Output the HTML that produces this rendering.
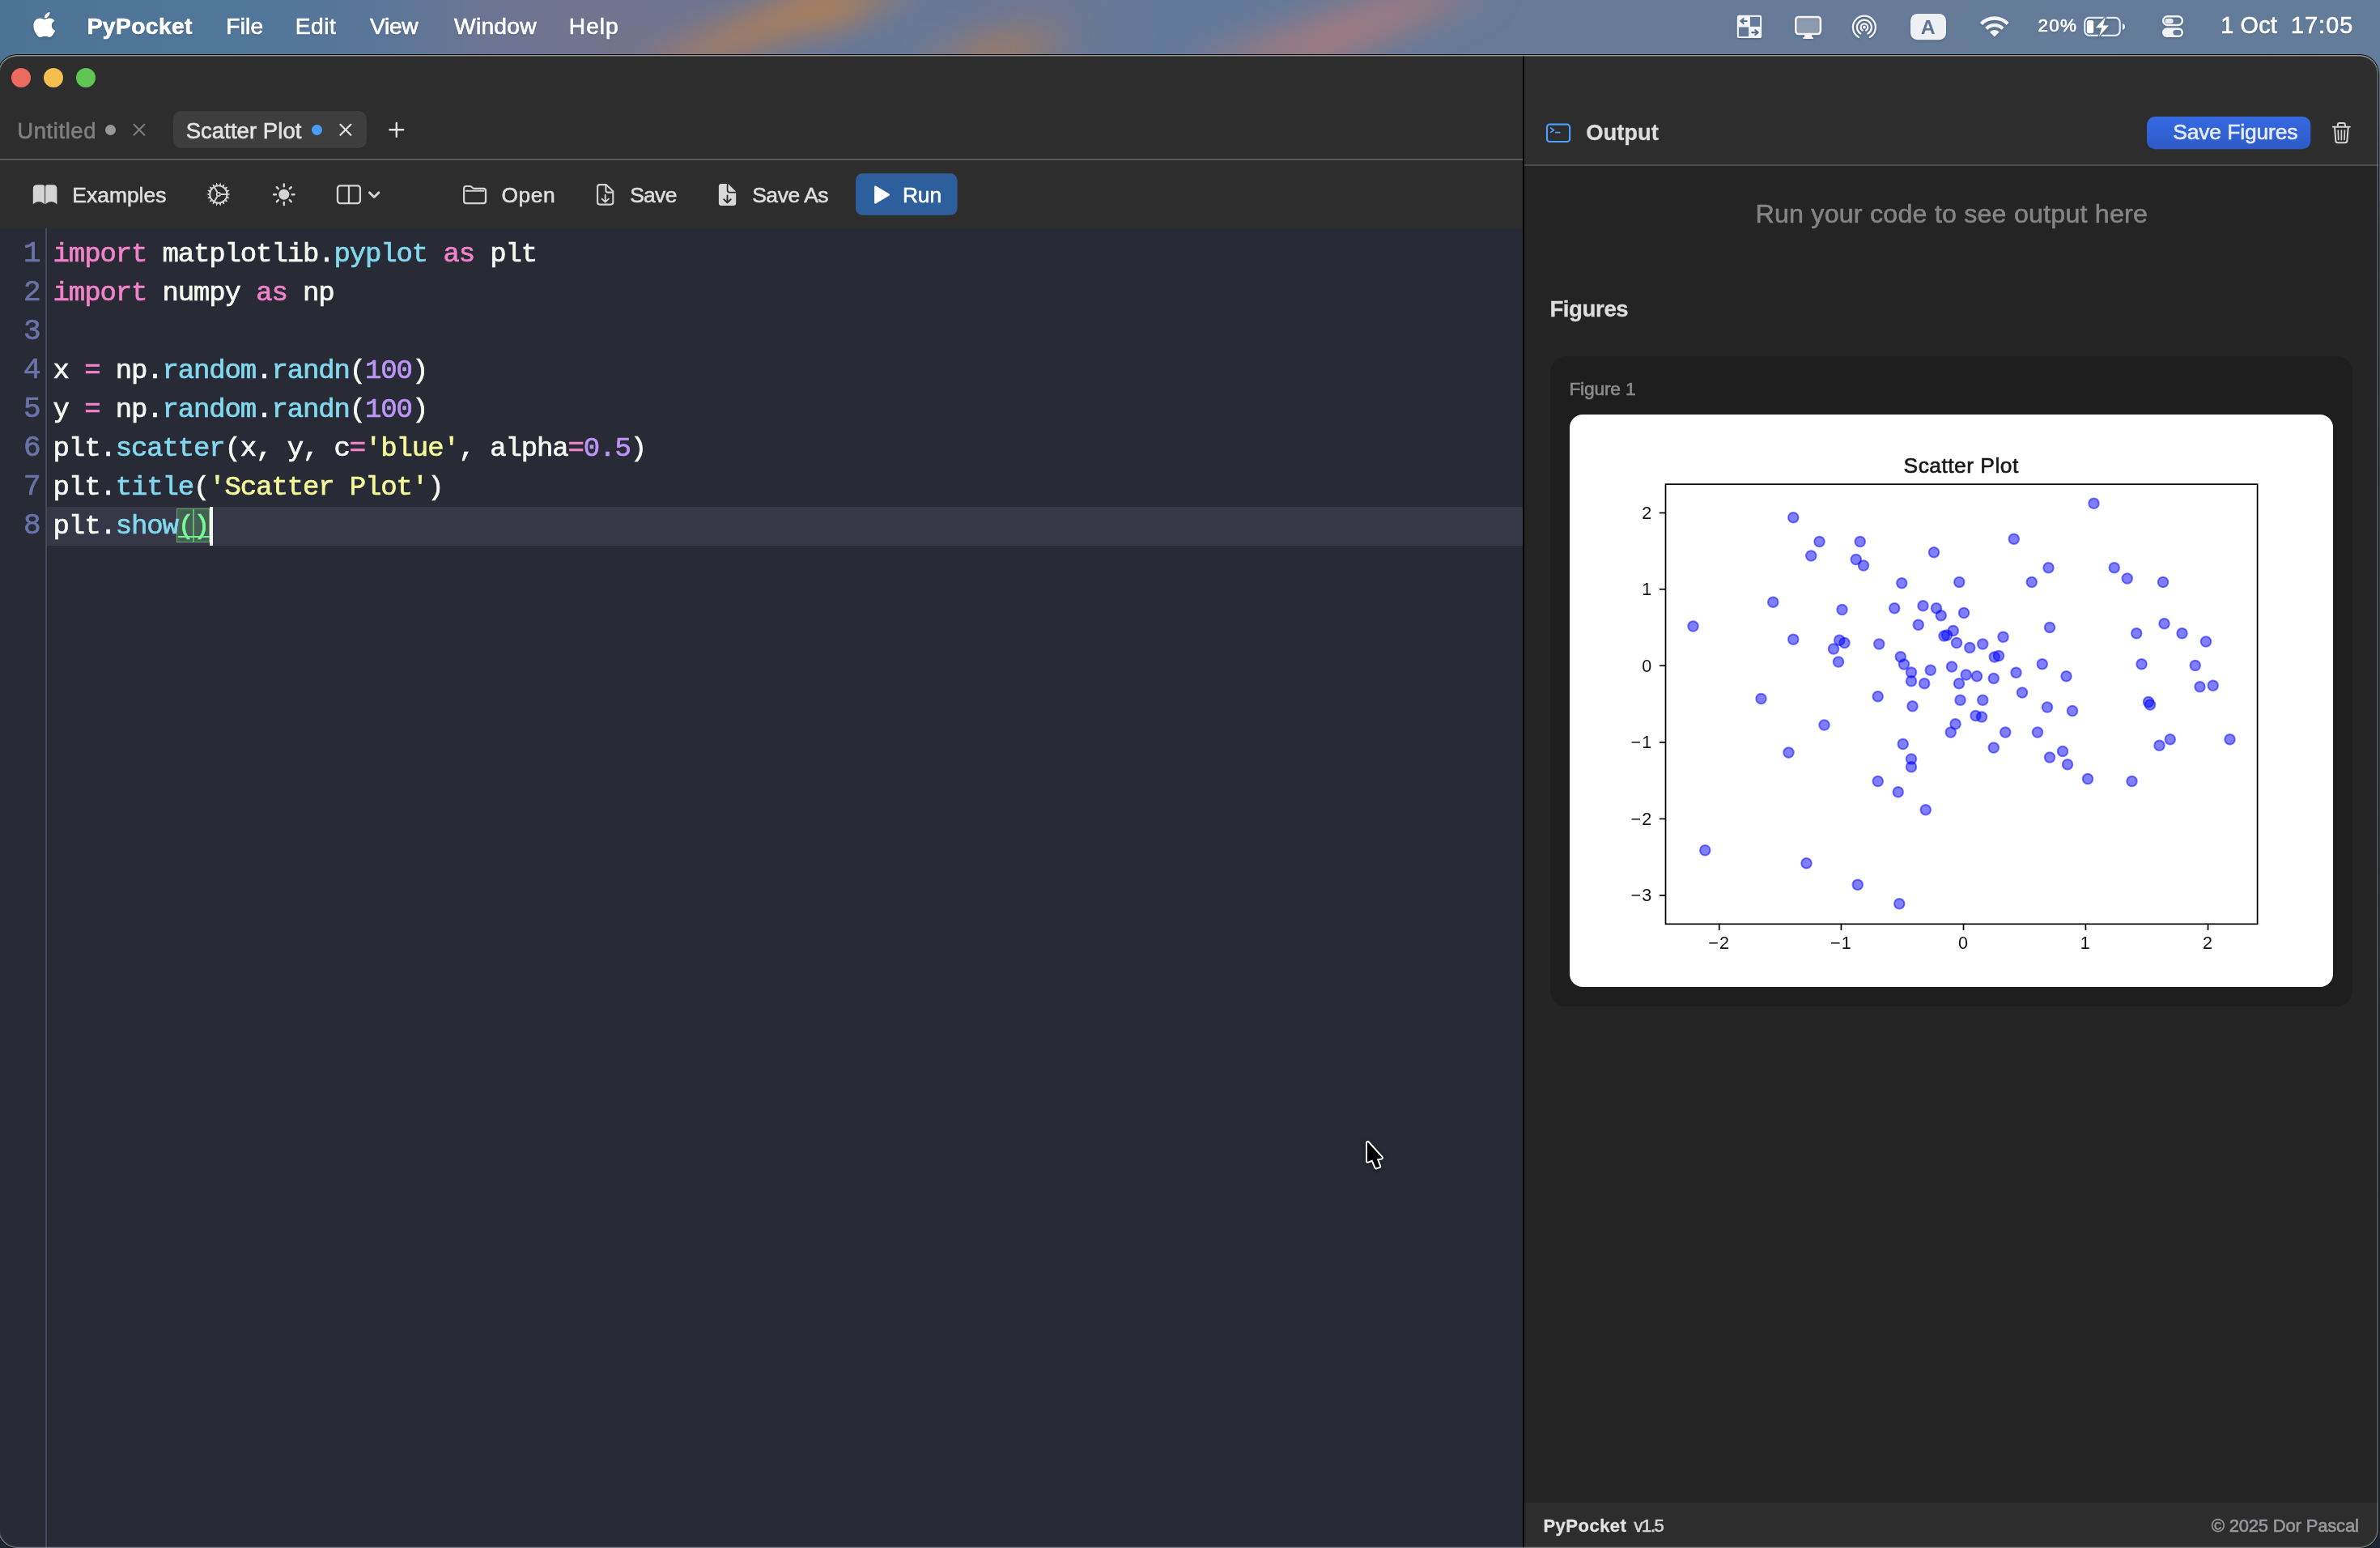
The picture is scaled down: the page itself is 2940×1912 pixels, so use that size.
<!DOCTYPE html>
<html lang="en">
<head>
<meta charset="utf-8">
<title>PyPocket</title>
<style>
html,body{margin:0;padding:0}
body{width:2940px;height:1912px;overflow:hidden;position:relative;background:#1b2833;font-family:"Liberation Sans",sans-serif}
.a{position:absolute}
.t{position:absolute;white-space:nowrap;line-height:1}
#wall{position:absolute;left:0;top:0;width:2940px;height:1912px;overflow:hidden;background:linear-gradient(180deg,#506f90 0,#5b7394 70px,#3a4b60 300px,#1b2833 1500px)}
#mbbg{position:absolute;left:0;top:0;width:2940px;height:90px}
#win{position:absolute;left:-2px;top:68px;width:2939.900px;height:1844px;border-radius:23px;overflow:hidden;background:#2d2d2d;box-shadow:0 0 0 1px rgba(0,0,0,.9)}
#winedge{position:absolute;left:-2px;top:68px;width:2939.900px;height:1844px;border-radius:23px;box-sizing:border-box;pointer-events:none;box-shadow:inset 0 0 0 1px rgba(255,255,255,.27),inset 0 0 0 2px rgba(255,255,255,.12),inset 0 1.5px 0 0 rgba(255,255,255,.22),inset 0 -1px 0 0 rgba(255,255,255,.06)}
/* coordinates inside #win are page coords shifted by (+1,-68); use wrapper to keep page coords */
#in{position:absolute;left:2px;top:-68px;width:2940px;height:1912px}
#editor{left:0;top:282px;width:1881px;height:1640px;background:#282a36}
#gutterline{left:56px;top:282px;width:2px;height:1640px;background:#44475a}
#activeline{left:58px;top:626px;width:1823px;height:48px;background:#363848}
#divider{left:1881px;top:68px;width:2px;height:1850px;background:#000}
#outbody{left:1883px;top:205px;width:1060px;height:1651px;background:#242424}
#outfoot{left:1883px;top:1856px;width:1060px;height:60px;background:#2d2d2d}
.sep{background:#4c4c4c}
.ln,.cl{position:absolute;font-family:"Liberation Mono",monospace;font-size:34.0px;line-height:48px;height:48px;white-space:pre;letter-spacing:-1.133px}
.ln{left:0;width:50.500px;text-align:right;color:#6874a8;letter-spacing:0;font-size:36px;-webkit-text-stroke:.7px #6874a8}
.cl{left:65.6px;color:#f8f8f2;-webkit-text-stroke:.7px currentColor}
.k{color:#f283c9}.c{color:#82d9ef}.n{color:#b996f6}.s{color:#f3f998}.g{color:#78fa96}
#card{left:1915px;top:440px;width:991px;height:802.600px;border-radius:20px;background:#1e1e1e}
#figbox{left:1939px;top:512px;width:943.300px;height:707px;border-radius:16px;background:#fff;overflow:hidden}
#fig{position:absolute;left:0;top:0;filter:blur(.45px)}
</style>
</head>
<body>
<div id="wall">
<svg id="mbbg" width="2940" height="90" viewBox="0 0 2940 90">
<defs>
<linearGradient id="wg" x1="0" x2="1" y1="0" y2="0">
<stop offset="0" stop-color="#4d7395"/><stop offset=".10" stop-color="#50769a"/><stop offset=".16" stop-color="#5a7698"/><stop offset=".20" stop-color="#6a7593"/><stop offset=".25" stop-color="#72748e"/><stop offset=".37" stop-color="#66799a"/><stop offset=".44" stop-color="#6e7894"/><stop offset=".49" stop-color="#637a9c"/><stop offset=".65" stop-color="#687b98"/><stop offset="1" stop-color="#627c9a"/>
</linearGradient>
<filter id="bl" x="-30%" y="-200%" width="160%" height="500%"><feGaussianBlur stdDeviation="22"/></filter>
<filter id="bl2" x="-30%" y="-200%" width="160%" height="500%"><feGaussianBlur stdDeviation="14"/></filter>
</defs>
<rect width="2940" height="90" fill="url(#wg)"/>
<g filter="url(#bl)">
<polygon points="775,85 860,85 1140,-15 1000,-15" fill="#b57e52" opacity=".95"/>
<polygon points="940,36 1030,36 1130,-15 1010,-15" fill="#b8804f" opacity=".9"/>
<polygon points="790,85 860,85 900,55 830,55" fill="#a77a70" opacity=".7"/>
<polygon points="1120,85 1250,85 1330,40 1230,40" fill="#ad7c58" opacity=".85"/>
<polygon points="1450,85 1640,85 1845,-15 1725,-15" fill="#a37a7e" opacity=".95"/>
</g>
</svg>
</div>

<!-- ============ menu bar ============ -->
<svg class="a" style="left:40px;top:13px;filter:drop-shadow(0 1px 1.5px rgba(0,0,0,.25))" width="30" height="36" viewBox="0 0 30 36"><g transform="translate(1.05,-0.1) scale(0.0715,0.0692)"><path fill="#fff" d="M318.7 268.7c-.2-36.700 16.400-64.400 50-84.800-18.800-26.900-47.200-41.700-84.700-44.600-35.500-2.800-74.300 20.700-88.500 20.700-15 0-49.400-19.700-76.400-19.700C63.300 141.200 4 184.800 4 273.500q0 39.300 14.400 81.200c12.800 36.700 59 126.700 107.200 125.200 25.200-.6 43-17.900 75.800-17.900 31.800 0 48.300 17.900 76.400 17.900 48.600-.7 90.400-82.500 102.600-119.300-65.200-30.700-61.700-90-61.700-91.900zm-56.600-164.200c27.300-32.400 24.800-61.900 24-72.500-24.100 1.400-52 16.400-67.900 34.900-17.500 19.800-27.800 44.300-25.600 71.900 26.100 2 49.900-11.400 69.500-34.300z"/></g></svg>

<svg class="a" style="left:2140px;top:12px;filter:drop-shadow(0 1px 1.5px rgba(0,0,0,.22))" width="780" height="44" viewBox="2140 12 780 44">
<!-- window tiling icon -->
<rect x="2145.8" y="18.8" width="30.4" height="28.3" rx="2.6" fill="#f3f4f7"/>
<rect x="2161.9" y="20.9" width="12.2" height="11.9" fill="#637999"/>
<rect x="2147.9" y="33.5" width="12.2" height="11.6" fill="#637999"/>
<path d="M2157.600 26h-7M2153.700 23.100l-3.400 2.900 3.400 2.900M2164.300 40.100h7M2168.300 37.200l3.400 2.900-3.400 2.900" fill="none" stroke="#5a6d8f" stroke-width="2.100" stroke-linecap="round" stroke-linejoin="round"/>
<!-- display -->
<rect x="2218.3" y="21" width="30.6" height="21" rx="3.4" fill="rgba(255,255,255,.28)" stroke="#f3f4f7" stroke-width="2.6"/>
<path d="M2229.200 42.800h8.800l.5 3.300h.6q.8 0 .8.800v.5q0 .6-.8.600h-11q-.8 0-.8-.6v-.5q0-.8.800-.8h.6z" fill="#f3f4f7"/>
<!-- airdrop-like -->
<g fill="none" stroke="#f3f4f7" stroke-width="2.250" stroke-linecap="round">
<path d="M2295.90 45.82A14 14 0 1 1 2309.90 45.82"/>
<path d="M2298.40 41.49A9 9 0 1 1 2307.40 41.49"/>
<path d="M2300.70 37.51A4.4 4.4 0 1 1 2305.10 37.51"/>
<circle cx="2302.9" cy="33.7" r="1.9" fill="#f3f4f7" stroke="none"/>
</g>
<!-- input source A -->
<rect x="2360" y="17" width="44" height="32.300" rx="8.5" fill="#eef0f4"/>
<text x="2381.800" y="41.800" font-family="Liberation Sans, sans-serif" font-weight="700" font-size="24.800" text-anchor="middle" fill="#5c7396">A</text>
<!-- wifi -->
<g fill="none" stroke="#f3f4f7" stroke-width="4.300">
<path d="M2447.41 29.54A22.6 22.6 0 0 1 2480.19 29.54"/>
<path d="M2453.64 35.46A14.0 14.0 0 0 1 2473.96 35.46"/>
</g>
<path d="M2463.8 45.4L2457.85 39.46A8.2 8.2 0 0 1 2469.75 39.46Z" fill="#f3f4f7"/>
<!-- battery -->
<rect x="2575.250" y="21.950" width="43.400" height="21.900" rx="5.700" fill="none" stroke="#daeeff" stroke-width="2.300"/>
<path d="M2621.800 28.900c2.300.6 3.300 2.300 3.300 4.100s-1 3.500-3.300 4.100z" fill="#daeeff"/>
<rect x="2577.800" y="24.900" width="8.400" height="16.400" rx="2.500" fill="#fff"/>
<path d="M2601 21.100L2588.900 34.200H2596.400L2592.900 45L2604.900 31.500H2597.800Z" fill="#637999" stroke="#637999" stroke-width="2.800" stroke-linejoin="round"/>
<path d="M2601 21.100L2588.900 34.200H2596.400L2592.900 45L2604.900 31.500H2597.800Z" fill="#fff"/>
<!-- control centre -->
<rect x="2672.100" y="20.300" width="23.800" height="10.700" rx="5.350" fill="none" stroke="#f3f4f7" stroke-width="2.400"/>
<rect x="2674.300" y="22.800" width="10.400" height="6.400" rx="3.200" fill="#e6eaf0"/>
<rect x="2670.900" y="34.300" width="26.200" height="11.700" rx="5.850" fill="#f0f2f5"/>
<rect x="2684.400" y="36.900" width="10.100" height="6.600" rx="3.300" fill="#637999"/>
</svg>

<div class="a" style="left:0;top:0;width:2940px;height:67px;opacity:.999">
<div class="t" style="left:107.64px;top:17.73px;font-size:28.2px;font-weight:700;color:#fff;letter-spacing:0.419px;text-shadow:0 1px 2px rgba(0,0,0,.28);-webkit-text-stroke:.7px #fff;">PyPocket</div>
<div class="t" style="left:279.30px;top:17.73px;font-size:28.2px;font-weight:400;color:#fff;letter-spacing:0.136px;text-shadow:0 1px 2px rgba(0,0,0,.28);-webkit-text-stroke:.7px #fff;">File</div>
<div class="t" style="left:364.80px;top:17.73px;font-size:28.2px;font-weight:400;color:#fff;letter-spacing:0.505px;text-shadow:0 1px 2px rgba(0,0,0,.28);-webkit-text-stroke:.7px #fff;">Edit</div>
<div class="t" style="left:457.00px;top:17.73px;font-size:28.2px;font-weight:400;color:#fff;letter-spacing:-0.319px;text-shadow:0 1px 2px rgba(0,0,0,.28);-webkit-text-stroke:.7px #fff;">View</div>
<div class="t" style="left:561.00px;top:17.73px;font-size:28.2px;font-weight:400;color:#fff;letter-spacing:0.272px;text-shadow:0 1px 2px rgba(0,0,0,.28);-webkit-text-stroke:.7px #fff;">Window</div>
<div class="t" style="left:702.80px;top:17.73px;font-size:28.2px;font-weight:400;color:#fff;letter-spacing:0.983px;text-shadow:0 1px 2px rgba(0,0,0,.28);-webkit-text-stroke:.7px #fff;">Help</div>
<div class="t" style="left:2517.40px;top:21.35px;font-size:22.5px;font-weight:400;color:#fff;letter-spacing:1.287px;text-shadow:0 1px 2px rgba(0,0,0,.28);-webkit-text-stroke:.7px #fff;">20%</div>
<div class="t" style="left:2743.21px;top:16.59px;font-size:28.6px;font-weight:400;color:#fff;letter-spacing:0.286px;text-shadow:0 1px 2px rgba(0,0,0,.28);-webkit-text-stroke:.7px #fff;">1 Oct</div>
<div class="t" style="left:2830.11px;top:16.59px;font-size:28.6px;font-weight:400;color:#fff;letter-spacing:1.094px;text-shadow:0 1px 2px rgba(0,0,0,.28);-webkit-text-stroke:.7px #fff;">17:05</div>
</div>

<!-- ============ window ============ -->
<div id="win"><div id="in">
<!-- traffic lights -->
<div class="a" style="left:14px;top:84px;width:24px;height:24px;border-radius:12px;background:#ed6a5e"></div>
<div class="a" style="left:54px;top:84px;width:24px;height:24px;border-radius:12px;background:#f5bf4f"></div>
<div class="a" style="left:94px;top:84px;width:24px;height:24px;border-radius:12px;background:#61c554"></div>
<!-- tabs -->
<div class="a" style="left:214px;top:137px;width:239px;height:46px;border-radius:10px;background:#3e3e3e"></div>
<div class="a" style="left:129.5px;top:153.800px;width:13px;height:13px;border-radius:7px;background:#98989d"></div>
<div class="a" style="left:384.500px;top:153.800px;width:13px;height:13px;border-radius:7px;background:#4a9eff"></div>
<svg class="a" style="left:0;top:130px" width="600" height="60" viewBox="0 130 600 60" fill="none" stroke-linecap="round">
<path d="M165.400 153.800l13 13M178.400 153.800l-13 13" stroke="#7f7f7f" stroke-width="2"/>
<path d="M420.400 153.800l13 13M433.400 153.800l-13 13" stroke="#e2e2e2" stroke-width="2.200"/>
<path d="M481.400 160.300h16.800M489.800 151.900v16.800" stroke="#e2e2e2" stroke-width="2.400"/>
</svg>
<div class="a" style="left:0;top:196px;width:1881px;height:2px;background:#595959"></div>

<!-- toolbar icons -->
<svg class="a" style="left:0;top:205px" width="1200" height="70" viewBox="0 205 1200 70">
<!-- book -->
<g fill="#d4d4d4">
<path d="M40.800 252.300V233.200Q40.800 228.300 45.800 228.300H52.600Q55.100 228.300 55.100 230.800V252.300Q48 245.800 40.800 252.300Z"/>
<path d="M70.400 252.300V233.200Q70.400 228.300 65.400 228.300H58.600Q56.100 228.300 56.100 230.800V252.300Q63.200 245.800 70.400 252.300Z"/>
</g>
<!-- gear -->
<path d="M281.13 238.70L284.10 239.63L284.10 240.37L281.13 241.30ZM280.89 242.62L283.37 244.51L283.11 245.20L280.00 245.06ZM279.33 246.22L281.01 248.84L280.54 249.41L277.66 248.21ZM276.64 249.07L277.32 252.11L276.68 252.48L274.39 250.37ZM273.13 250.83L272.73 253.91L272.00 254.04L270.57 251.28ZM269.23 251.28L267.80 254.04L267.07 253.91L266.67 250.83ZM265.41 250.37L263.12 252.48L262.48 252.11L263.16 249.07ZM262.14 248.21L259.26 249.41L258.79 248.84L260.47 246.22ZM259.80 245.06L256.69 245.20L256.43 244.51L258.91 242.62ZM258.67 241.30L255.70 240.37L255.70 239.63L258.67 238.70ZM258.91 237.38L256.43 235.49L256.69 234.80L259.80 234.94ZM260.47 233.78L258.79 231.16L259.26 230.59L262.14 231.79ZM263.16 230.93L262.48 227.89L263.12 227.52L265.41 229.63ZM266.67 229.17L267.07 226.09L267.80 225.96L269.23 228.72ZM270.57 228.72L272.00 225.96L272.73 226.09L273.13 229.17ZM274.39 229.63L276.68 227.52L277.32 227.89L276.64 230.93ZM277.66 231.79L280.54 230.59L281.01 231.16L279.33 233.78ZM280.00 234.94L283.11 234.80L283.37 235.49L280.89 237.38Z" fill="#d4d4d4"/>
<g stroke="#d4d4d4" fill="none">
<circle cx="269.9" cy="240.0" r="10.650" stroke-width="1.950"/>
<circle cx="269.9" cy="240.0" r="2.200" stroke-width="1.700"/>
<path d="M272.80 240.00L280.10 240.00M268.45 237.49L264.80 231.17M268.45 242.51L264.80 248.83" stroke-width="2"/>
</g>
<!-- sun -->
<circle cx="350.8" cy="240.2" r="6.500" fill="#d4d4d4"/>
<path d="M360.70 240.20L363.50 240.20M357.80 247.20L359.78 249.18M350.80 250.10L350.80 252.90M343.80 247.20L341.82 249.18M340.90 240.20L338.10 240.20M343.80 233.20L341.82 231.22M350.80 230.30L350.80 227.50M357.80 233.20L359.78 231.22" stroke="#d4d4d4" stroke-width="2.500" stroke-linecap="round" fill="none"/>
<!-- split view -->
<g fill="none" stroke="#d4d4d4" stroke-width="2.300">
<rect x="417" y="229.400" width="27.900" height="21.700" rx="3.400"/>
<path d="M430.950 229.400v21.700"/>
<path d="M456.400 237.900l5.750 5.600 5.750-5.600" stroke-width="2.900" stroke-linecap="round" stroke-linejoin="round"/>
</g>
<!-- folder -->
<g fill="none" stroke="#d4d4d4" stroke-width="2.200" stroke-linejoin="round">
<path d="M573.100 233.300v-.6c0-1.600 1.200-2.700 2.800-2.700h4.300c1 0 1.800.3 2.500 1l1.100 1c.7.600 1.500.9 2.500.9h10.800c1.700 0 2.900 1.200 2.900 2.900v12.400c0 1.700-1.200 2.900-2.900 2.900h-21.100c-1.700 0-2.900-1.200-2.900-2.900z"/>
<path d="M575.800 235.800h21.600" stroke-linecap="round" stroke-width="1.900"/>
</g>
<!-- save (doc outline + arrow) -->
<g fill="none" stroke="#d4d4d4" stroke-width="2.100" stroke-linejoin="round" stroke-linecap="round">
<path d="M748.600 228.100h-7.700c-1.700 0-2.800 1.100-2.800 2.800v18.900c0 1.700 1.100 2.800 2.800 2.800h13.600c1.700 0 2.800-1.100 2.800-2.800v-13.500z"/>
<path d="M748.400 228.300v6.900c0 1.500.9 2.400 2.400 2.400h6.300"/>
<path d="M747.700 240.600v8.700M743.600 245.600l4.100 4 4.100-4" stroke-width="1.900"/>
</g>
<!-- save as (filled doc) -->
<path d="M897.700 227h-6.800c-1.800 0-3 1.200-3 3v21c0 1.800 1.200 3 3 3h15.300c1.800 0 3-1.200 3-3v-12.500h-8c-2.200 0-3.500-1.300-3.500-3.500z" fill="#d8d8d8"/>
<path d="M899.500 227l9.700 9.800h-7.300c-1.500 0-2.400-.9-2.400-2.400z" fill="#d8d8d8"/>
<path d="M898.500 241.600v8.300M894.300 246.300l4.200 4.100 4.200-4.100" fill="none" stroke="#2d2d2d" stroke-width="2" stroke-linecap="round" stroke-linejoin="round"/>
<!-- run button -->
<rect x="1057" y="214.200" width="125.600" height="51.500" rx="8.500" fill="#2d5f9c"/>
<path d="M1080.100 230.500v20c0 .9.900 1.400 1.700.9l16.800-10c.7-.4.700-1.400 0-1.800l-16.800-10c-.8-.5-1.700 0-1.700.9z" fill="#fff"/>
</svg>

<!-- editor -->
<div id="editor" class="a"></div>
<div id="gutterline" class="a"></div>
<div id="activeline" class="a"></div>
<div class="a" style="left:218.400px;top:628.300px;width:20.800px;height:41.400px;box-sizing:border-box;background:#465f55;border:1.300px solid #5fb06f"></div>
<div class="a" style="left:237.900px;top:628.300px;width:21.300px;height:41.400px;box-sizing:border-box;background:#465f55;border:1.300px solid #5fb06f"></div>
<div class="a" style="left:237.900px;top:628.300px;width:2.600px;height:41.400px;background:#62b973"></div>
<div class="a" style="left:220px;top:662.300px;width:38.600px;height:2.100px;background:#6df08f"></div>
<div class="ln" style="top:290.35px">1</div><div class="cl" style="top:290.35px"><span class="k">import</span> matplotlib.<span class="c">pyplot</span> <span class="k">as</span> plt</div>
<div class="ln" style="top:338.35px">2</div><div class="cl" style="top:338.35px"><span class="k">import</span> numpy <span class="k">as</span> np</div>
<div class="ln" style="top:386.35px">3</div><div class="cl" style="top:386.35px"></div>
<div class="ln" style="top:434.35px">4</div><div class="cl" style="top:434.35px">x <span class="k">=</span> np.<span class="c">random</span>.<span class="c">randn</span>(<span class="n">100</span>)</div>
<div class="ln" style="top:482.35px">5</div><div class="cl" style="top:482.35px">y <span class="k">=</span> np.<span class="c">random</span>.<span class="c">randn</span>(<span class="n">100</span>)</div>
<div class="ln" style="top:530.35px">6</div><div class="cl" style="top:530.35px">plt.<span class="c">scatter</span>(x, y, c<span class="k">=</span><span class="s">'blue'</span>, alpha<span class="k">=</span><span class="n">0.5</span>)</div>
<div class="ln" style="top:578.35px">7</div><div class="cl" style="top:578.35px">plt.<span class="c">title</span>(<span class="s">'Scatter Plot'</span>)</div>
<div class="ln" style="top:626.35px">8</div><div class="cl" style="top:626.35px">plt.<span class="c">show</span><span class="g">()</span></div>

<div class="a" style="left:259.200px;top:626px;width:3.800px;height:48px;background:#f8f8f2"></div>
<!-- mouse cursor -->
<svg class="a" style="left:1670px;top:1395px;filter:drop-shadow(0 1.500px 2.500px rgba(0,0,0,.55))" width="60" height="65" viewBox="1670 1395 60 65">
<path d="M1689.600 1411.600V1434.100L1695.700 1431.800L1699.900 1441.800L1703.600 1440.600L1700.100 1431.200L1706.300 1430Z" fill="#fff" stroke="#fff" stroke-width="5.200" stroke-linejoin="round"/>
<path d="M1689.600 1411.600V1434.100L1695.700 1431.800L1699.900 1441.800L1703.600 1440.600L1700.100 1431.200L1706.300 1430Z" fill="#000" stroke="#000" stroke-width="1.200" stroke-linejoin="round"/>
</svg>

<!-- divider + output pane -->
<div id="divider" class="a"></div>
<div id="outbody" class="a"></div>
<div id="outfoot" class="a"></div>
<div class="a" style="left:1883px;top:203px;width:1060px;height:2px;background:#4b4b4b"></div>
<svg class="a" style="left:1900px;top:140px" width="1030" height="50" viewBox="1900 140 1030 50">
<defs><linearGradient id="sb" x1="0" x2="0" y1="0" y2="1"><stop offset="0" stop-color="#3569e2"/><stop offset="1" stop-color="#2d5ac6"/></linearGradient></defs>
<!-- terminal icon -->
<rect x="1911" y="153.700" width="28.100" height="21.300" rx="3.300" fill="none" stroke="#4a9fff" stroke-width="2.200"/>
<path d="M1915.600 158l3.900 2.700-3.900 2.700M1921.800 163.600h5" fill="none" stroke="#4a9fff" stroke-width="1.700" stroke-linecap="round" stroke-linejoin="round"/>
<!-- save figures button -->
<rect x="2652" y="144" width="202.300" height="40.300" rx="10" fill="url(#sb)"/>
<!-- trash -->
<g fill="none" stroke="#d4d4d4" stroke-width="2" stroke-linecap="round" stroke-linejoin="round">
<path d="M2881.900 156.700h20.900"/>
<path d="M2887.800 156.300v-2.200c0-1.300.9-2.200 2.200-2.200h4.700c1.300 0 2.200.9 2.200 2.200v2.200"/>
<path d="M2884 157.200l1.300 16.700c.1 1.500 1.100 2.400 2.600 2.400h8.900c1.500 0 2.500-.9 2.600-2.400l1.300-16.700"/>
<path d="M2888.300 161.200l.4 11.300M2892.350 161.200v11.300M2896.400 161.200l-.4 11.300" stroke-width="1.700"/>
</g>
</svg>
<div id="card" class="a"></div>
<div id="figbox" class="a">
<svg id="fig" width="943" height="707" viewBox="0 0 943 707">
<g fill="#0000ff" fill-opacity=".5" stroke="#0000ff" stroke-opacity=".5" stroke-width="2"><circle cx="152.50" cy="261.50" r="6.25"/><circle cx="276.25" cy="127.25" r="6.25"/><circle cx="308.50" cy="157.00" r="6.25"/><circle cx="358.75" cy="157.00" r="6.25"/><circle cx="298.25" cy="174.50" r="6.25"/><circle cx="353.75" cy="179.00" r="6.25"/><circle cx="363.00" cy="186.50" r="6.25"/><circle cx="450.00" cy="170.25" r="6.25"/><circle cx="548.75" cy="153.75" r="6.25"/><circle cx="647.50" cy="109.75" r="6.25"/><circle cx="591.50" cy="189.25" r="6.25"/><circle cx="672.75" cy="189.25" r="6.25"/><circle cx="688.75" cy="202.50" r="6.25"/><circle cx="410.25" cy="208.25" r="6.25"/><circle cx="481.25" cy="207.00" r="6.25"/><circle cx="570.75" cy="207.00" r="6.25"/><circle cx="251.25" cy="231.75" r="6.25"/><circle cx="336.50" cy="241.00" r="6.25"/><circle cx="401.25" cy="239.25" r="6.25"/><circle cx="436.50" cy="236.25" r="6.25"/><circle cx="453.00" cy="239.25" r="6.25"/><circle cx="458.75" cy="248.25" r="6.25"/><circle cx="487.00" cy="245.00" r="6.25"/><circle cx="430.75" cy="259.75" r="6.25"/><circle cx="593.00" cy="263.00" r="6.25"/><circle cx="473.75" cy="267.00" r="6.25"/><circle cx="462.50" cy="273.50" r="6.25"/><circle cx="466.00" cy="272.50" r="6.25"/><circle cx="535.50" cy="274.75" r="6.25"/><circle cx="700.25" cy="270.25" r="6.25"/><circle cx="276.25" cy="277.75" r="6.25"/><circle cx="333.25" cy="278.75" r="6.25"/><circle cx="339.50" cy="282.00" r="6.25"/><circle cx="326.00" cy="289.50" r="6.25"/><circle cx="382.25" cy="283.50" r="6.25"/><circle cx="478.00" cy="282.00" r="6.25"/><circle cx="494.25" cy="288.00" r="6.25"/><circle cx="510.25" cy="283.50" r="6.25"/><circle cx="530.00" cy="298.00" r="6.25"/><circle cx="524.75" cy="299.50" r="6.25"/><circle cx="332.00" cy="305.50" r="6.25"/><circle cx="408.75" cy="299.25" r="6.25"/><circle cx="413.00" cy="308.50" r="6.25"/><circle cx="422.00" cy="318.50" r="6.25"/><circle cx="445.75" cy="315.75" r="6.25"/><circle cx="472.00" cy="311.50" r="6.25"/><circle cx="583.75" cy="308.25" r="6.25"/><circle cx="706.50" cy="308.25" r="6.25"/><circle cx="551.50" cy="318.75" r="6.25"/><circle cx="613.50" cy="323.25" r="6.25"/><circle cx="489.75" cy="321.50" r="6.25"/><circle cx="503.00" cy="323.25" r="6.25"/><circle cx="523.75" cy="326.00" r="6.25"/><circle cx="422.00" cy="329.25" r="6.25"/><circle cx="438.25" cy="332.25" r="6.25"/><circle cx="481.00" cy="332.25" r="6.25"/><circle cx="559.00" cy="343.50" r="6.25"/><circle cx="236.50" cy="351.00" r="6.25"/><circle cx="380.75" cy="348.25" r="6.25"/><circle cx="482.50" cy="352.75" r="6.25"/><circle cx="510.25" cy="352.75" r="6.25"/><circle cx="423.50" cy="360.25" r="6.25"/><circle cx="590.00" cy="361.50" r="6.25"/><circle cx="621.00" cy="366.00" r="6.25"/><circle cx="501.50" cy="372.00" r="6.25"/><circle cx="509.00" cy="373.50" r="6.25"/><circle cx="476.50" cy="382.25" r="6.25"/><circle cx="314.50" cy="383.50" r="6.25"/><circle cx="470.75" cy="392.50" r="6.25"/><circle cx="538.25" cy="392.50" r="6.25"/><circle cx="578.00" cy="392.50" r="6.25"/><circle cx="411.75" cy="407.00" r="6.25"/><circle cx="523.75" cy="411.50" r="6.25"/><circle cx="270.50" cy="417.50" r="6.25"/><circle cx="609.00" cy="416.00" r="6.25"/><circle cx="593.00" cy="423.50" r="6.25"/><circle cx="615.00" cy="432.25" r="6.25"/><circle cx="422.00" cy="425.50" r="6.25"/><circle cx="422.00" cy="435.25" r="6.25"/><circle cx="380.75" cy="453.00" r="6.25"/><circle cx="640.00" cy="450.00" r="6.25"/><circle cx="694.50" cy="453.00" r="6.25"/><circle cx="405.75" cy="466.25" r="6.25"/><circle cx="733.00" cy="207.00" r="6.25"/><circle cx="734.50" cy="258.25" r="6.25"/><circle cx="756.50" cy="270.25" r="6.25"/><circle cx="786.00" cy="280.50" r="6.25"/><circle cx="772.75" cy="310.00" r="6.25"/><circle cx="778.50" cy="336.25" r="6.25"/><circle cx="794.75" cy="334.75" r="6.25"/><circle cx="715.00" cy="355.00" r="6.25"/><circle cx="717.00" cy="358.50" r="6.25"/><circle cx="741.75" cy="401.25" r="6.25"/><circle cx="728.50" cy="408.75" r="6.25"/><circle cx="815.50" cy="401.25" r="6.25"/><circle cx="439.75" cy="488.25" r="6.25"/><circle cx="167.25" cy="538.25" r="6.25"/><circle cx="292.50" cy="554.25" r="6.25"/><circle cx="355.75" cy="580.75" r="6.25"/><circle cx="407.25" cy="604.25" r="6.25"/></g>
<rect x="118.50" y="86.10" width="731.10" height="543.20" fill="none" stroke="#000" stroke-width="1.7"/>
<g stroke="#000" stroke-width="1.7"><line x1="184.75" x2="184.75" y1="629.30" y2="636.90"/><line x1="335.40" x2="335.40" y1="629.30" y2="636.90"/><line x1="486.50" x2="486.50" y1="629.30" y2="636.90"/><line x1="637.40" x2="637.40" y1="629.30" y2="636.90"/><line x1="788.50" x2="788.50" y1="629.30" y2="636.90"/><line x1="110.90" x2="118.50" y1="121.50" y2="121.50"/><line x1="110.90" x2="118.50" y1="215.80" y2="215.80"/><line x1="110.90" x2="118.50" y1="310.20" y2="310.20"/><line x1="110.90" x2="118.50" y1="404.90" y2="404.90"/><line x1="110.90" x2="118.50" y1="499.40" y2="499.40"/><line x1="110.90" x2="118.50" y1="593.90" y2="593.90"/></g>
<g font-family="Liberation Sans, sans-serif" font-size="21.5" fill="#111" letter-spacing="1.2"><text x="184.75" y="660.00" text-anchor="middle">−2</text><text x="335.40" y="660.00" text-anchor="middle">−1</text><text x="486.50" y="660.00" text-anchor="middle">0</text><text x="637.40" y="660.00" text-anchor="middle">1</text><text x="788.50" y="660.00" text-anchor="middle">2</text><text x="102.50" y="128.80" text-anchor="end">2</text><text x="102.50" y="223.10" text-anchor="end">1</text><text x="102.50" y="317.50" text-anchor="end">0</text><text x="102.50" y="412.20" text-anchor="end">−1</text><text x="102.50" y="506.70" text-anchor="end">−2</text><text x="102.50" y="601.20" text-anchor="end">−3</text></g>
</svg>
</div>
<div class="t" style="left:21.28px;top:147.62px;font-size:27.5px;font-weight:400;color:#7f7f7f;letter-spacing:0.574px;-webkit-text-stroke:0.6px #7f7f7f;">Untitled</div>
<div class="t" style="left:229.64px;top:147.62px;font-size:27.5px;font-weight:400;color:#e4e4e4;letter-spacing:0.056px;-webkit-text-stroke:0.6px #e4e4e4;">Scatter Plot</div>
<div class="t" style="left:89.34px;top:227.85px;font-size:26.4px;font-weight:400;color:#dedede;letter-spacing:0.025px;-webkit-text-stroke:0.6px #dedede;">Examples</div>
<div class="t" style="left:619.51px;top:227.85px;font-size:26.4px;font-weight:400;color:#dedede;letter-spacing:0.546px;-webkit-text-stroke:0.6px #dedede;">Open</div>
<div class="t" style="left:778.17px;top:227.85px;font-size:26.4px;font-weight:400;color:#dedede;letter-spacing:-0.660px;-webkit-text-stroke:0.6px #dedede;">Save</div>
<div class="t" style="left:929.17px;top:227.85px;font-size:26.4px;font-weight:400;color:#dedede;letter-spacing:-0.403px;-webkit-text-stroke:0.6px #dedede;">Save As</div>
<div class="t" style="left:1114.94px;top:227.85px;font-size:26.4px;font-weight:400;color:#fff;letter-spacing:-0.143px;-webkit-text-stroke:0.6px #fff;">Run</div>
<div class="t" style="left:1959.14px;top:150.01px;font-size:27.4px;font-weight:700;color:#dedede;letter-spacing:-0.016px;-webkit-text-stroke:0.3px #dedede;">Output</div>
<div class="t" style="left:2684.18px;top:149.65px;font-size:26.4px;font-weight:400;color:#e6ecfb;letter-spacing:-0.099px;-webkit-text-stroke:0.6px #e6ecfb;">Save Figures</div>
<div class="t" style="left:2168.48px;top:248.44px;font-size:32.2px;font-weight:400;color:#858585;letter-spacing:0.215px;-webkit-text-stroke:0.6px #858585;">Run your code to see output here</div>
<div class="t" style="left:1914.38px;top:367.54px;font-size:27.6px;font-weight:700;color:#dedede;letter-spacing:-0.390px;-webkit-text-stroke:0.3px #dedede;">Figures</div>
<div class="t" style="left:1938.40px;top:468.90px;font-size:22.8px;font-weight:400;color:#8c8c8c;letter-spacing:-0.209px;-webkit-text-stroke:0.6px #8c8c8c;">Figure 1</div>
<div class="t" style="left:1906.40px;top:1873.98px;font-size:22px;font-weight:700;color:#e2e2e2;letter-spacing:0.496px;-webkit-text-stroke:0.3px #e2e2e2;">PyPocket</div>
<div class="t" style="left:2018.50px;top:1873.98px;font-size:22px;font-weight:400;color:#d6d6d6;letter-spacing:-1.416px;-webkit-text-stroke:0.6px #d6d6d6;">v1.5</div>
<div class="t" style="left:2731.70px;top:1873.88px;font-size:22px;font-weight:400;color:#98989d;letter-spacing:-0.174px;-webkit-text-stroke:0.6px #98989d;">© 2025 Dor Pascal</div>
<div class="t" style="left:2351.58px;top:561.95px;font-size:26.4px;font-weight:400;color:#161616;letter-spacing:0.480px;-webkit-text-stroke:0.6px #161616;">Scatter Plot</div>
</div></div>
<div id="winedge"></div>
</body>
</html>
